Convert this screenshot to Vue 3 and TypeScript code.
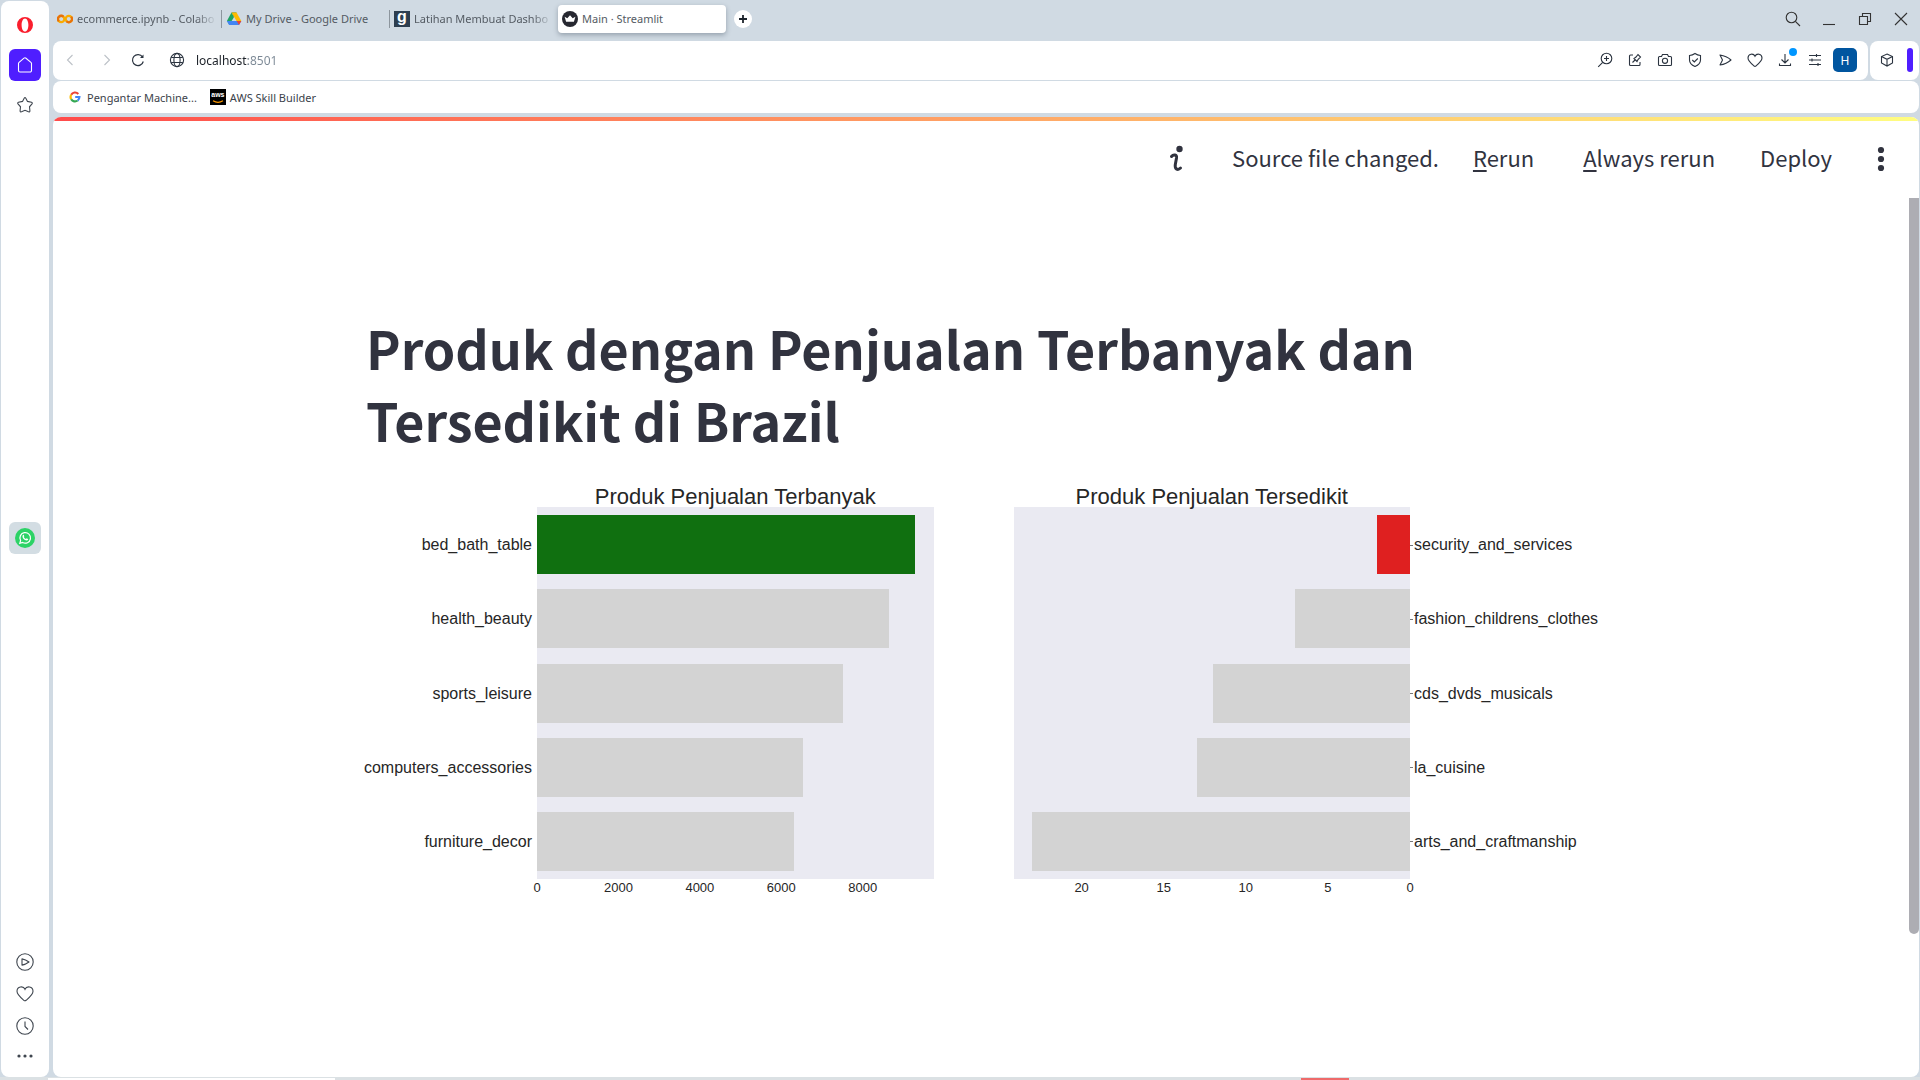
<script setup lang="ts">
import { ref } from 'vue'

interface Bar {
  label: string
  value: number
  color: string
}

const address = ref('localhost:8501')

const GREY = '#d3d3d3'
const topMax = 9737
const top: Bar[] = [
  { label: 'bed_bath_table', value: 9274, color: '#107010' },
  { label: 'health_beauty', value: 8650, color: GREY },
  { label: 'sports_leisure', value: 7520, color: GREY },
  { label: 'computers_accessories', value: 6530, color: GREY },
  { label: 'furniture_decor', value: 6300, color: GREY },
]
const topTicks = [0, 2000, 4000, 6000, 8000]

const lowMax = 24.15
const low: Bar[] = [
  { label: 'security_and_services', value: 2, color: '#df2020' },
  { label: 'fashion_childrens_clothes', value: 7, color: GREY },
  { label: 'cds_dvds_musicals', value: 12, color: GREY },
  { label: 'la_cuisine', value: 13, color: GREY },
  { label: 'arts_and_craftmanship', value: 23, color: GREY },
]
const lowTicks = [20, 15, 10, 5, 0]

const pct = (value: number, max: number) => `${(value / max) * 100}%`
</script>

<template>
  <div class="window">
    <div class="frame">
      <nav class="sidebar" aria-label="Sidebar">
        <div class="side-group">
          <button class="side-btn" aria-label="Opera menu">
            <svg width="18" height="18" viewBox="0 0 18 18"><path fill="#fa1e2d" fill-rule="evenodd" d="M9 1a8 8 0 1 0 0 16A8 8 0 0 0 9 1Zm0 1.4c2 0 3.4 2.9 3.4 6.6S11 15.600 9 15.600 5.600 12.700 5.600 9 7 2.400 9 2.400Z" /></svg>
          </button>
          <button class="side-btn home" aria-label="Home">
            <svg class="line" width="18" height="18" viewBox="0 0 18 18"><path d="M2.500 7.500q0-.7.600-1.200L8 2.200q1-.8 2 0l4.900 4.100q.6.500.6 1.200V14.500a1.500 1.500 0 0 1-1.500 1.500H4a1.500 1.500 0 0 1-1.500-1.500Z" /></svg>
          </button>
          <button class="side-btn" aria-label="Bookmarks">
            <svg class="line" width="18" height="18" viewBox="0 0 18 18"><path d="M8.200 2.200q.8-1.300 1.600 0l1.700 3.200 4 .9q1.300.5.5 1.600l-2.500 2.900.4 4q0 1.500-1.400 1L9 14.300l-3.500 1.500q-1.400.5-1.400-1l.4-4L2 7.900q-.8-1.100.5-1.600l4-.9Z" /></svg>
          </button>
        </div>
        <button class="side-btn whatsapp" aria-label="WhatsApp">
          <svg width="20" height="20" viewBox="0 0 20 20">
            <circle cx="10" cy="10" r="10" fill="#2cd366" />
            <path d="M4.800 15.300l.8-2.800a5.300 5.300 0 1 1 2 2Z" fill="none" stroke="#fff" stroke-width="1.200" />
            <path d="M7.800 7.200c.7-.7 1-.3 1.500 1l-.5.900q.7 1.300 2.100 1.900l.8-.7q1.900.7 1.500 1.300c-.6 1.300-2.200 1.200-3.700.2C7.700 10.600 7 8.300 7.800 7.200Z" fill="#fff" />
          </svg>
        </button>
        <div class="side-group low">
          <button class="side-btn" aria-label="Player">
            <svg class="line" width="18" height="18" viewBox="0 0 18 18"><circle cx="9" cy="9" r="8.200" /><path d="M6 5.900q3.500.7 7 3.100Q9.500 11.500 6 12.100Z" stroke-linejoin="round" /></svg>
          </button>
          <button class="side-btn" aria-label="Pinboards">
            <svg class="line" width="18" height="18" viewBox="0 0 18 18"><path d="M9 4.300C7.500.8 1 1 1 6.300c0 3.400 4.500 7 6.900 9q1.100.9 2.200 0c2.400-2 6.900-5.600 6.900-9C17 1 10.500.8 9 4.300Z" /></svg>
          </button>
          <button class="side-btn" aria-label="History">
            <svg class="line" width="18" height="18" viewBox="0 0 18 18"><circle cx="9" cy="9" r="8.200" /><path d="M9 4.500v5l3 3" /></svg>
          </button>
          <button class="side-btn short" aria-label="More">
            <svg width="18" height="6" viewBox="0 0 18 6" fill="#3f464f"><circle cx="3" cy="3" r="1.600" /><circle cx="9" cy="3" r="1.600" /><circle cx="15" cy="3" r="1.600" /></svg>
          </button>
        </div>
      </nav>

      <div class="main">
        <header class="tabs">
          <div class="tab">
            <svg width="16" height="16" viewBox="0 0 16 16" fill="none" stroke-width="2.300">
              <circle cx="4.200" cy="8" r="3.200" stroke="#f9ab00" />
              <circle cx="11.800" cy="8" r="3.200" stroke="#f9ab00" />
              <path d="M9.500 10.300a3.200 3.200 0 0 0 4.600-4.600M6.500 5.700a3.200 3.200 0 0 0-4.600 4.600" stroke="#e8710a" />
            </svg>
            <span class="tab-text fade">ecommerce.ipynb - Colabo</span>
          </div>
          <div class="tab divided">
            <svg width="16" height="16" viewBox="0 0 16 16">
              <path d="M5.500 1.500h5L8 6Z" fill="#188038" /><path d="M5.500 1.500 1 9.700l2.300 4.300L8 6Z" fill="#1ea362" />
              <path d="M5.500 1.500h5L15.300 10H10.500Z" fill="#ffba00" />
              <path d="M.8 10h14.500l-2.300 4H3.200Z" fill="#4285f4" /><path d="M10.700 10h4.600L13 14Z" fill="#ea4335" />
            </svg>
            <span class="tab-text">My Drive - Google Drive</span>
          </div>
          <div class="tab divided">
            <span class="fav-g">g</span>
            <span class="tab-text fade">Latihan Membuat Dashbo</span>
          </div>
          <div class="tab active">
            <svg width="16" height="16" viewBox="0 0 16 16"><circle cx="8" cy="8" r="8" fill="#262730" /><path d="M2.600 5.700 5.300 7.200 8 4.300l2.700 2.900 2.700-1.500-1.500 5.100H4.100Z" fill="#fff" /></svg>
            <span class="tab-text">Main · Streamlit</span>
          </div>
          <button class="new-tab" aria-label="New tab">
            <svg width="18" height="18" viewBox="0 0 18 18"><circle cx="9" cy="9" r="9" fill="#fff" /><path d="M9 5v8M5 9h8" stroke="#1d242c" stroke-width="1.800" /></svg>
          </button>
          <div class="controls">
            <button aria-label="Search tabs"><svg class="line" width="16" height="16" viewBox="0 0 16 16"><circle cx="6.500" cy="6.500" r="5.300" /><path d="m10.400 10.400 4.600 4.600" /></svg></button>
            <button aria-label="Minimise"><svg class="line" width="16" height="16" viewBox="0 0 16 16"><path d="M2 13.500h12" /></svg></button>
            <button aria-label="Restore"><svg class="line" width="16" height="16" viewBox="0 0 16 16"><path d="M2.500 5.500h8v8h-8ZM5.500 5.500v-3h8v8h-3" /></svg></button>
            <button aria-label="Close"><svg class="line" width="16" height="16" viewBox="0 0 16 16"><path d="m2 2 12 12M14 2 2 14" /></svg></button>
          </div>
        </header>

        <div class="address-row">
          <div class="address-bar">
            <button class="nav faint" aria-label="Back"><svg class="line" width="16" height="16" viewBox="0 0 16 16"><path d="M10.500 3 5.500 8l5 5" /></svg></button>
            <button class="nav faint forward" aria-label="Forward"><svg class="line" width="16" height="16" viewBox="0 0 16 16"><path d="m5.500 3 5 5-5 5" /></svg></button>
            <button class="nav reload" aria-label="Reload"><svg class="line" width="16" height="16" viewBox="0 0 16 16"><path stroke-width="1.200" d="M13.300 9.500a5.500 5.500 0 1 1-.8-4.600" /><path d="M13.500 2.500v3.500H10Z" fill="currentColor" stroke="none" /></svg></button>
            <button class="nav globe" aria-label="Site information"><svg class="line" width="16" height="16" viewBox="0 0 16 16"><circle cx="8" cy="8" r="6.600" /><ellipse cx="8" cy="8" rx="3.100" ry="6.600" /><path d="M2.200 5.500h11.600M2.200 10.500h11.600" /></svg></button>
            <input v-model="address" class="address" type="text" aria-label="Address" spellcheck="false" />
            <div class="tools">
              <button aria-label="Zoom"><svg class="line" width="16" height="16" viewBox="0 0 16 16"><circle cx="9.500" cy="6.500" r="5.300" /><path d="M5.700 10.300 1.200 14.800M9.500 4v5M7 6.500h5" /></svg></button>
              <button aria-label="Edit"><svg class="line" width="16" height="16" viewBox="0 0 16 16"><path d="M6 3H3.500a1 1 0 0 0-1 1v8.500a1 1 0 0 0 1 1H12a1 1 0 0 0 1-1V10M5.500 10.500l2.500-2.500M7 6.500l3 3 1-2 2.500-2.500-2.500-2.500L9 5Z" /></svg></button>
              <button aria-label="Snapshot"><svg class="line" width="16" height="16" viewBox="0 0 16 16"><path d="M1.500 5.500a1 1 0 0 1 1-1h2l1-2h5l1 2h2a1 1 0 0 1 1 1v7a1 1 0 0 1-1 1h-11a1 1 0 0 1-1-1Z" /><circle cx="8" cy="8.800" r="2.600" /></svg></button>
              <button aria-label="Privacy"><svg class="line" width="16" height="16" viewBox="0 0 16 16"><path d="M8 1.500Q10.500 3.200 13.500 3.500V8c0 3.500-2.700 5.300-5.500 6.500C5.200 13.300 2.500 11.500 2.500 8V3.500Q5.500 3.200 8 1.500ZM5.300 8l2 2 3.500-3.500" /></svg></button>
              <button aria-label="Flow"><svg class="line" width="16" height="16" viewBox="0 0 16 16"><path d="M3 3q6.500 1 11 5-4.500 4-11 5l2.500-5Z" stroke-linejoin="round" /></svg></button>
              <button aria-label="Save to pinboard"><svg class="line" width="16" height="16" viewBox="0 0 16 16"><path d="M8 4.200C6.500 1 1 1.400 1 6c0 3 4 6.200 6.100 8q.9.700 1.800 0C11 12.200 15 9 15 6c0-4.600-5.500-5-7-1.800Z" /></svg></button>
              <button class="download" aria-label="Downloads"><svg class="line" width="16" height="16" viewBox="0 0 16 16"><path d="M8 2v9M4.500 7.500 8 11l3.500-3.500M2.500 11.500v2h11v-2" /></svg><span class="badge"></span></button>
              <button aria-label="Easy setup"><svg class="line" width="16" height="16" viewBox="0 0 16 16"><path d="M2 3.500h12M2 8h12M2 12.500h12M9.500 2v3M5 6.500v3M11 11v3" /></svg></button>
            </div>
            <button class="profile" aria-label="Profile">H</button>
          </div>
          <div class="extensions">
            <button aria-label="Extensions"><svg class="line" width="16" height="16" viewBox="0 0 16 16"><path d="m8 2 5.500 2.500v6.500L8 14l-5.500-3V4.500ZM2.500 4.500 8 7.300l5.500-2.800M8 7.300V14" /></svg></button>
            <span class="accent"></span>
          </div>
        </div>

        <nav class="bookmarks" aria-label="Bookmarks bar">
          <a href="#">
            <svg class="google" width="12" height="12" viewBox="0 0 12 12" fill="none" stroke-width="2.200">
              <path d="M9.300 2.900A4.400 4.400 0 0 0 2.200 3.800" stroke="#ea4335" /><path d="M2.200 3.800a4.400 4.400 0 0 0 0 4.400" stroke="#fbbc05" />
              <path d="M2.200 8.200a4.400 4.400 0 0 0 6.500 1.300" stroke="#34a853" /><path d="M8.700 9.500Q10.300 8.300 10.400 6H6.200" stroke="#4285f4" />
            </svg>
            <span>Pengantar Machine...</span>
          </a>
          <a href="#">
            <span class="fav-aws">aws<svg width="12" height="4" viewBox="0 0 12 4"><path d="M1 .8q5 3 10 0" fill="none" stroke="#f90" stroke-width="1.200" /></svg></span>
            <span>AWS Skill Builder</span>
          </a>
        </nav>

        <main class="page">
          <div class="rainbow"></div>
          <div class="toolbar">
            <svg class="info" width="16" height="28" viewBox="0 0 16 28"><circle cx="10.500" cy="4" r="3.200" fill="#31333f" /><path d="M2.500 11.500c2-2.500 5.500-2 5 1.500L6.300 19.500c-.8 5 2.700 6 5.200 3.500" fill="none" stroke="#31333f" stroke-width="3" stroke-linecap="round" /></svg>
            <span class="status">Source file changed.</span>
            <button class="rerun"><span><u>R</u>erun</span></button>
            <button class="always"><span><u>A</u>lways rerun</span></button>
            <button class="deploy">Deploy</button>
            <button class="menu" aria-label="Main menu"><svg width="8" height="26" viewBox="0 0 8 26" fill="#31333f"><circle cx="4" cy="4" r="3.100" /><circle cx="4" cy="13" r="3.100" /><circle cx="4" cy="22" r="3.100" /></svg></button>
          </div>
          <div class="scroll-thumb"></div>

          <section class="content">
            <h1>Produk dengan Penjualan Terbanyak dan Tersedikit di Brazil</h1>
            <div class="charts">
              <h2 class="title-a">Produk Penjualan Terbanyak</h2>
              <h2 class="title-b">Produk Penjualan Tersedikit</h2>
              <div class="labels start">
                <span v-for="b in top" :key="b.label">{{ b.label }}</span>
              </div>
              <div class="plot">
                <div v-for="b in top" :key="b.label" class="row">
                  <div class="bar" :style="{ width: pct(b.value, topMax), background: b.color }"></div>
                </div>
              </div>
              <div class="plot reversed">
                <div v-for="b in low" :key="b.label" class="row">
                  <div class="bar" :style="{ width: pct(b.value, lowMax), background: b.color }"></div>
                </div>
              </div>
              <div class="labels end">
                <span v-for="b in low" :key="b.label">{{ b.label }}</span>
              </div>
              <div class="axis axis-a">
                <span v-for="t in topTicks" :key="t" :style="{ left: pct(t, topMax) }">{{ t }}</span>
              </div>
              <div class="axis axis-b">
                <span v-for="t in lowTicks" :key="t" :style="{ left: pct(lowMax - t, lowMax) }">{{ t }}</span>
              </div>
            </div>
          </section>
        </main>
      </div>
    </div>
    <div class="underlay"><span class="sheet"></span><span class="mark"></span></div>
  </div>
</template>

<style>
body {
  margin: 0;
  background: #d0dae3;
}
</style>

<style scoped>
.window {
  display: flex;
  flex-direction: column;
  min-height: 100vh;
  font-family: "Noto Sans", "Open Sans", sans-serif;
  font-size: 12px;
  color: #31333f;
  background: #d0dae3;
}
.frame {
  flex: 1;
  display: flex;
  gap: 4px;
  padding: 0 1px;
}
button {
  display: flex;
  align-items: center;
  justify-content: center;
  padding: 0;
  border: 0;
  background: none;
  font: inherit;
  color: inherit;
}
svg {
  display: block;
  flex: none;
}
.line {
  fill: none;
  stroke: currentColor;
  stroke-width: 1.1;
}

.sidebar {
  flex: none;
  display: grid;
  grid-template-rows: 1fr auto 1fr;
  justify-items: center;
  width: 48px;
  margin-top: 1px;
  box-sizing: border-box;
  background: #fff;
  border-radius: 8px;
  color: #3f464f;
}
.side-group {
  display: flex;
  flex-direction: column;
  gap: 8px;
  padding-top: 8px;
}
.side-group.low {
  align-self: end;
  gap: 0;
  padding: 0 0 7px;
}
.side-btn {
  width: 32px;
  height: 32px;
  border-radius: 6px;
}
.side-btn.short {
  height: 28px;
}
.home {
  background: #4f1eff;
  color: #fff;
}
.whatsapp {
  margin-bottom: 2px;
  background: #d3dde3;
}

.main {
  flex: 1;
  min-width: 0;
  display: flex;
  flex-direction: column;
}
.tabs {
  display: flex;
  align-items: flex-start;
  height: 41px;
  color: #545b63;
}
.tab {
  display: flex;
  align-items: center;
  gap: 4px;
  flex: 0 1 168px;
  min-width: 0;
  height: 28px;
  margin-top: 5px;
  padding: 0 4px;
  box-sizing: border-box;
}
.tab-text {
  flex: 1;
  white-space: nowrap;
  font-size: 11px;
  line-height: 16px;
}
.tab-text.fade {
  -webkit-mask-image: linear-gradient(to right, #000 85%, transparent);
  mask-image: linear-gradient(to right, #000 85%, transparent);
}
.divided {
  background: linear-gradient(#8d969e, #8d969e) 0 5px / 1px 18px no-repeat;
  padding-left: 5px;
}
.active {
  margin-left: 1px;
  background: #fff;
  border-radius: 4px;
  box-shadow: 0 2px 5px rgba(60, 75, 90, 0.4);
}
.fav-g {
  flex: none;
  width: 16px;
  height: 16px;
  background: #2d3e50;
  color: #fff;
  text-align: center;
  font: bold 16px/12px "Liberation Sans", sans-serif;
}
.new-tab {
  width: 18px;
  height: 18px;
  margin: 10px 0 0 8px;
}
.controls {
  display: flex;
  margin-left: auto;
  color: #333;
}
.controls button {
  width: 36px;
  height: 38px;
}

.address-row {
  display: flex;
  gap: 2px;
  height: 39px;
  color: #2b3440;
}
.address-bar {
  flex: 1;
  min-width: 0;
  display: flex;
  align-items: center;
  padding: 0 11px 1px 0;
  background: #fff;
  border-radius: 8px;
}
.nav {
  width: 34px;
  height: 34px;
}
.nav.faint {
  color: #bcc1c7;
}
.nav.forward {
  width: 40px;
}
.nav.reload {
  width: 22px;
}
.nav.globe {
  width: 36px;
  margin: 0 1px 0 10px;
}
.address {
  flex: 1;
  min-width: 0;
  padding: 0;
  border: 0;
  outline: 0;
  font: inherit;
  color: transparent;
  background: linear-gradient(to right, #1b2027 52px, #7a8794 52px);
  -webkit-background-clip: text;
  background-clip: text;
}
.tools {
  display: flex;
}
.tools button {
  width: 30px;
  height: 30px;
}
.download {
  position: relative;
}
.badge {
  position: absolute;
  top: 3px;
  right: 3px;
  width: 8px;
  height: 8px;
  border-radius: 50%;
  background: #0096ff;
}
.profile {
  width: 24px;
  height: 24px;
  margin-left: 3px;
  border-radius: 5px;
  background: #00559f;
  color: #fff;
}
.extensions {
  display: flex;
  align-items: center;
  justify-content: space-between;
  width: 49px;
  box-sizing: border-box;
  padding: 0 6px 1px 9px;
  background: #fff;
  border-radius: 8px;
}
.accent {
  width: 6px;
  height: 24px;
  border-radius: 3px;
  background: #4f1eff;
}

.bookmarks {
  display: flex;
  align-items: center;
  gap: 13px;
  height: 32px;
  margin-top: 1px;
  padding-left: 16px;
  background: #fff;
  border-radius: 8px;
  font-size: 11px;
}
.bookmarks a {
  display: flex;
  align-items: center;
  gap: 4px;
  color: #3b424a;
  text-decoration: none;
}
.google {
  margin: 0 2px 0 0;
}
.fav-aws {
  display: flex;
  flex-direction: column;
  align-items: center;
  width: 16px;
  height: 16px;
  background: #000;
  color: #fff;
  font: bold 7px/11px "Liberation Sans", sans-serif;
}

.page {
  position: relative;
  flex: 1;
  margin-top: 4px;
  background: #fff;
  border-radius: 8px;
  overflow: hidden;
}
.rainbow {
  height: 4px;
  background: linear-gradient(to right, #ff4b4b, #fffd80);
}
.toolbar {
  display: flex;
  align-items: center;
  justify-content: flex-end;
  height: 76px;
  padding-right: 34px;
  font-family: "Noto Sans CJK SC", sans-serif;
  font-size: 22px;
  line-height: 32px;
}
.status,
.rerun,
.always,
.deploy {
  padding-bottom: 4px;
}
.info {
  margin-right: 47px;
}
.status {
  margin-right: 34px;
}
.rerun {
  margin-right: 49px;
}
.always {
  margin-right: 45px;
}
.deploy {
  margin-right: 45px;
}
.toolbar u {
  text-decoration-thickness: 2px;
  text-underline-offset: 3px;
}
.scroll-thumb {
  position: absolute;
  top: 81px;
  bottom: 143px;
  right: 0;
  width: 10px;
  border-radius: 0 0 5px 5px;
  background: #adadb3;
}
.content {
  max-width: 1230px;
  margin: 0 auto;
  padding: 115px 10px 100px 0;
}
h1 {
  margin: 0;
  font-family: "Noto Sans CJK SC", sans-serif;
  font-size: 52px;
  font-weight: 600;
  line-height: 72px;
}
.charts {
  display: grid;
  grid-template-columns: 171px 1fr 80px 1fr 186px;
  margin-top: 31px;
  font-family: "Liberation Sans", Arial, sans-serif;
  color: #262626;
}
h2 {
  z-index: 1;
  margin: 0;
  font-size: 22px;
  font-weight: 400;
  line-height: 20px;
  text-align: center;
  white-space: nowrap;
}
.title-a,
.axis-a {
  grid-column: 2;
}
.title-b,
.axis-b {
  grid-column: 4;
}
.labels,
.plot {
  grid-row: 2;
  display: flex;
  flex-direction: column;
  height: 372px;
}
.labels {
  box-sizing: border-box;
  padding-top: 1px;
  font-size: 16px;
  white-space: nowrap;
}
.labels span,
.row {
  flex: 1;
  display: flex;
  align-items: center;
}
.start span {
  justify-content: flex-end;
  padding-right: 5px;
}
.end span::before {
  content: "";
  flex: none;
  width: 3px;
  height: 1px;
  margin-right: 1px;
  background: #777;
}
.plot {
  grid-column: 2;
  background: #eaeaf2;
}
.labels.end {
  grid-column: 5;
}
.plot.reversed {
  grid-column: 4;
}
.reversed .row {
  justify-content: flex-end;
}
.bar {
  height: 59px;
}
.axis {
  position: relative;
  height: 18px;
  font-size: 13px;
  line-height: 18px;
}
.axis span {
  position: absolute;
  transform: translateX(-50%);
}

.underlay {
  display: flex;
  height: 3px;
  padding: 0 571px 0 48px;
  justify-content: space-between;
  align-items: flex-end;
  background: #dbe1e4;
}
.sheet {
  width: 287px;
  height: 2px;
  background: #fff;
}
.mark {
  width: 48px;
  height: 2px;
  background: #ee6a6a;
}
</style>
